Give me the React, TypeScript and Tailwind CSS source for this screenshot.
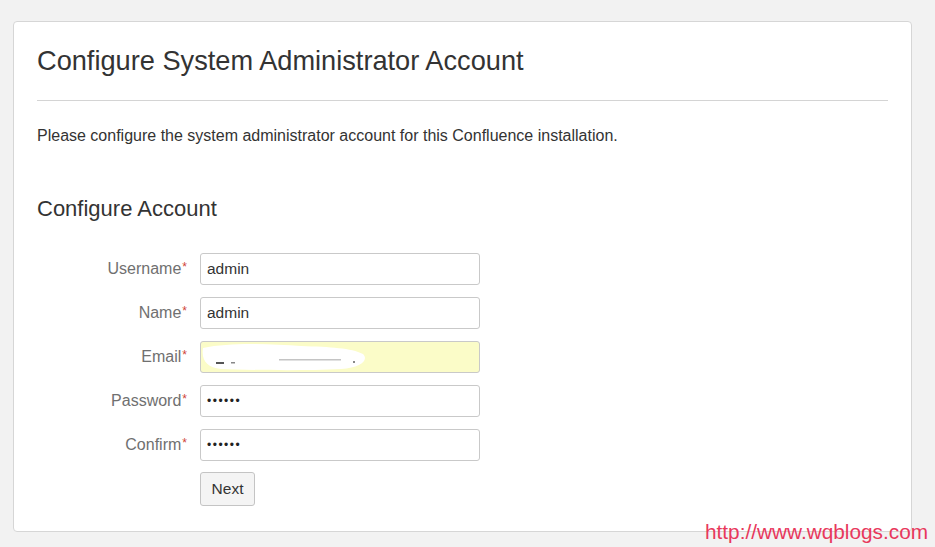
import React from 'react';

const fields = [
  { label: 'Username', value: 'admin', kind: 'text' },
  { label: 'Name', value: 'admin', kind: 'text' },
  { label: 'Email', value: '', kind: 'email' },
  { label: 'Password', value: '••••••', kind: 'pw' },
  { label: 'Confirm', value: '••••••', kind: 'pw' },
];

function EmailSmudge() {
  // blurred-out address in the reference
  return (
    <svg width="200" height="30" viewBox="0 0 200 30" className="absolute left-0 top-0">
      <path
        d="M2 6 C30 0 70 2 100 4 C130 5 150 6 162 12 C168 18 160 26 140 27 C100 29 50 28 20 27 C6 26 0 18 2 6 Z"
        fill="#ffffff"
      />
      <rect x="15" y="20" width="8" height="2" fill="#555" />
      <rect x="30" y="20" width="4" height="1.5" fill="#888" />
      <rect x="78" y="17" width="62" height="1.5" fill="#c4c4c4" />
      <rect x="152" y="19" width="2" height="2" fill="#888" />
    </svg>
  );
}

export default function App() {
  return (
    <div className="min-h-[547px] w-[935px] bg-[#f2f2f2] pt-[21px] pl-[13px] font-['Liberation_Sans',Arial,sans-serif] relative">
      <div className="w-[899px] h-[511px] bg-white border border-[#d6d6d6] rounded-[4px] px-[23px]">
        <h1 className="pt-[22px] text-[27.2px] leading-[34px] text-[#333]">
          Configure System Administrator Account
        </h1>
        <div className="mt-[22px] h-px bg-[#d4d4d4]" />
        <p className="mt-[25px] text-[16px] leading-[20px] text-[#333]">
          Please configure the system administrator account for this Confluence installation.
        </p>
        <h2 className="mt-[49px] text-[22px] leading-[28px] text-[#333]">Configure Account</h2>
        <div className="mt-[30px] flex flex-col gap-[12px]">
          {fields.map((f) => (
            <div key={f.label} className="flex items-center">
              <div className="w-[150px] text-right text-[16px] text-[#707070] leading-[20px]">
                {f.label}
                <sup className="text-[#d04437] text-[12px] relative top-[-3px] ml-[1px]">*</sup>
              </div>
              <div
                className={`ml-[13px] w-[280px] h-[32px] border border-[#c9c9c9] rounded-[3px] relative flex items-center px-[6px] text-[15.5px] text-[#333] ${
                  f.kind === 'email' ? 'bg-[#fbfcc8]' : 'bg-white'
                }`}
              >
                {f.kind === 'email' ? (
                  <EmailSmudge />
                ) : f.kind === 'pw' ? (
                  <span className="text-[12px] tracking-[1.5px] text-[#222]">{f.value}</span>
                ) : (
                  <span>{f.value}</span>
                )}
              </div>
            </div>
          ))}
          <div className="flex -mt-[1px]">
            <div className="w-[150px]" />
            <button className="ml-[13px] w-[55px] h-[34px] border border-[#c4c4c4] rounded-[3px] bg-[#f4f4f4] text-[15.5px] text-[#333]">
              Next
            </button>
          </div>
        </div>
      </div>
      <div className="absolute left-[705px] top-[519px] text-[20.8px] leading-[26px] text-[#e8385c]">
        http://www.wqblogs.com
      </div>
    </div>
  );
}
